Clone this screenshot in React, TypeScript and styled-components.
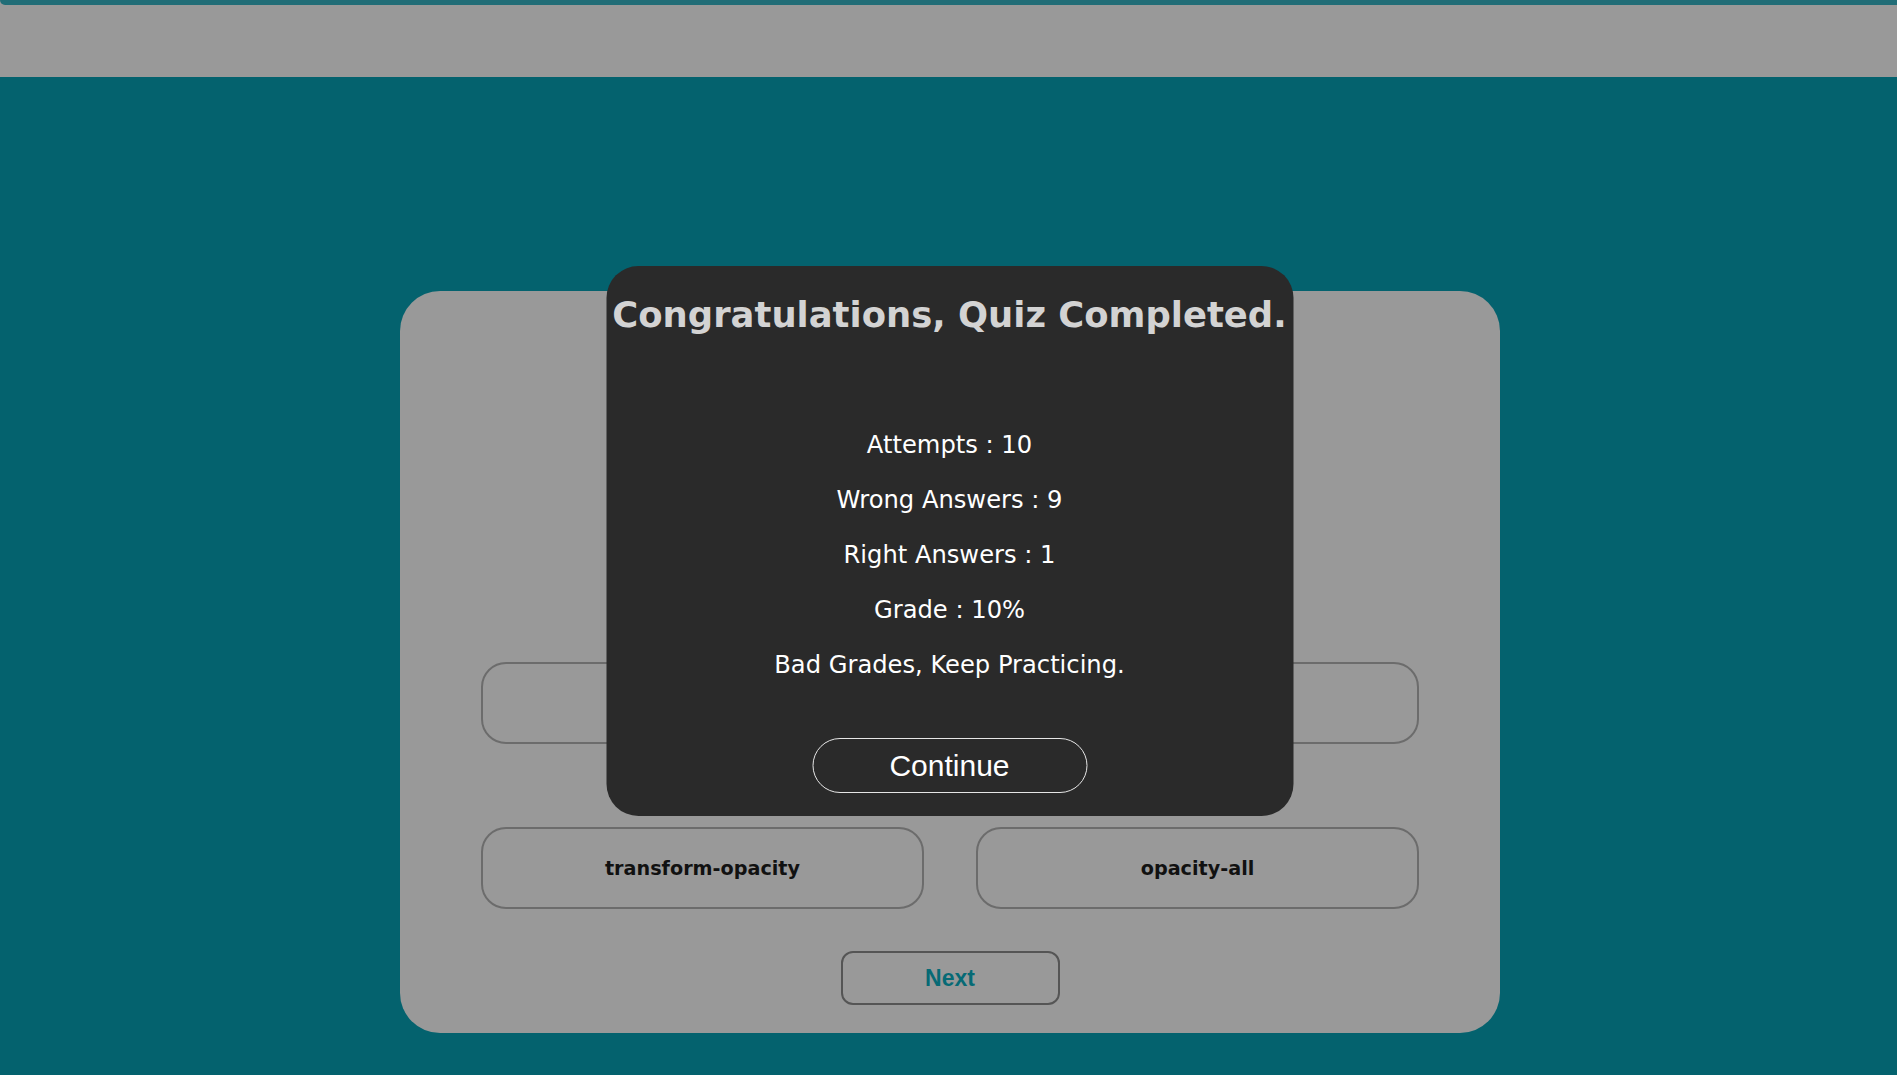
import React from "react";
import styled, { createGlobalStyle } from "styled-components";

const Global = createGlobalStyle`
  html, body { margin: 0; padding: 0; }
  body {
    background: #04626e;
    font-family: "DejaVu Sans", Verdana, sans-serif;
    min-height: 1075px;
  }
`;

const Page = styled.div`
  position: relative;
  min-height: 1075px;
  background: #04626e;
  display: flex;
  flex-direction: column;
`;

const Header = styled.header`
  display: flex;
  flex-direction: column;
  background: #999999;
  height: 77px;
`;

const HeaderStripe = styled.div`
  height: 5px;
  background: #216d77;
  border-bottom-left-radius: 5px;
`;

const Main = styled.main`
  display: flex;
  justify-content: center;
  padding-top: 214px;
`;

const Card = styled.section`
  width: 1100px;
  margin-left: 3px;
  box-sizing: border-box;
  background: #999999;
  border-radius: 40px;
  padding: 0 81px 28px;
  display: flex;
  flex-direction: column;
  align-items: center;
`;

const QuestionArea = styled.div`
  height: 371px;
  width: 100%;
`;

const Options = styled.div`
  width: 100%;
  display: grid;
  grid-template-columns: 1fr 1fr;
  column-gap: 52px;
  row-gap: 83px;
`;

const Option = styled.button`
  height: 82px;
  box-sizing: border-box;
  border: 2px solid #6c6c6c;
  border-radius: 25px;
  background: transparent;
  font-family: "DejaVu Sans", Verdana, sans-serif;
  font-weight: bold;
  font-size: 19.2px;
  color: #111111;
  cursor: pointer;
`;

const NextButton = styled.button`
  margin-top: 42px;
  width: 219px;
  height: 54px;
  box-sizing: border-box;
  border: 2px solid #555555;
  border-radius: 12px;
  background: transparent;
  font-family: "Liberation Sans", Arial, sans-serif;
  font-weight: bold;
  font-size: 23px;
  color: #066a75;
  cursor: pointer;
`;

const Modal = styled.div`
  position: absolute;
  top: 266px;
  left: calc(50% + 1px);
  transform: translateX(-50%);
  width: 687px;
  height: 550px;
  box-sizing: border-box;
  background: #2a2a2a;
  border-radius: 32px;
  padding-top: 28px;
  display: flex;
  flex-direction: column;
  align-items: center;
`;

const Title = styled.h1`
  margin: 0;
  font-family: "DejaVu Sans", Verdana, sans-serif;
  font-weight: bold;
  font-size: 35.4px;
  line-height: 41px;
  color: #d3d3d3;
  white-space: nowrap;
`;

const Stats = styled.div`
  margin-top: 96px;
  display: flex;
  flex-direction: column;
  align-items: center;
  gap: 27px;
`;

const StatLine = styled.p`
  margin: 0;
  font-family: "DejaVu Sans", Verdana, sans-serif;
  font-size: 24.2px;
  line-height: 28px;
  color: #ffffff;
`;

const ContinueButton = styled.button`
  margin-top: 59px;
  width: 275px;
  height: 55px;
  box-sizing: border-box;
  border: 1px solid #e6e6e6;
  border-radius: 28px;
  background: transparent;
  font-family: "Liberation Sans", Arial, sans-serif;
  font-size: 30px;
  color: #ffffff;
  cursor: pointer;
`;

const stats = [
  "Attempts : 10",
  "Wrong Answers : 9",
  "Right Answers : 1",
  "Grade : 10%",
  "Bad Grades, Keep Practicing.",
];

export default function App() {
  return (
    <Page>
      <Global />
      <Header>
        <HeaderStripe />
      </Header>
      <Main>
        <Card>
          <QuestionArea />
          <Options>
            <Option></Option>
            <Option></Option>
            <Option>transform-opacity</Option>
            <Option>opacity-all</Option>
          </Options>
          <NextButton>Next</NextButton>
        </Card>
      </Main>
      <Modal>
        <Title>Congratulations, Quiz Completed.</Title>
        <Stats>
          {stats.map((s) => (
            <StatLine key={s}>{s}</StatLine>
          ))}
        </Stats>
        <ContinueButton>Continue</ContinueButton>
      </Modal>
    </Page>
  );
}
